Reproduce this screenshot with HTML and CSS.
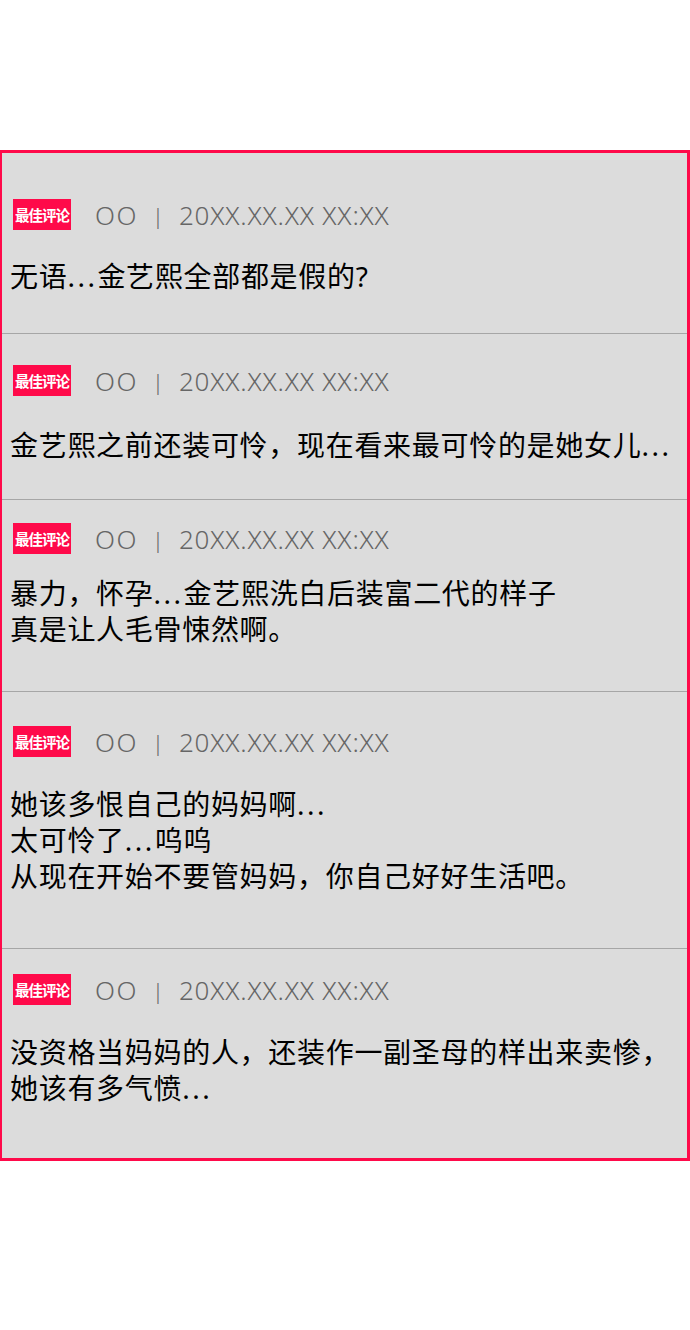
FILE: index.html
```html
<!DOCTYPE html>
<html lang="zh-CN">
<head>
<meta charset="utf-8">
<link rel="stylesheet" href="styles.css">
</head>
<body>
<div class="page">
  <div class="board">
    <div class="comment c1">
      <div class="meta"><span class="badge">最佳评论</span><span class="user">OO</span><span class="sep">|</span><span class="time">20XX.XX.XX XX:XX</span></div>
      <div class="text">无语<span class="dots">...</span>金艺熙全部都是假的?</div>
    </div>
    <div class="comment c2">
      <div class="meta"><span class="badge">最佳评论</span><span class="user">OO</span><span class="sep">|</span><span class="time">20XX.XX.XX XX:XX</span></div>
      <div class="text">金艺熙之前还装可怜，现在看来最可怜的是她女儿<span class="dots">...</span></div>
    </div>
    <div class="comment c3">
      <div class="meta"><span class="badge">最佳评论</span><span class="user">OO</span><span class="sep">|</span><span class="time">20XX.XX.XX XX:XX</span></div>
      <div class="text">暴力，怀孕<span class="dots">...</span>金艺熙洗白后装富二代的样子<br>真是让人毛骨悚然啊。</div>
    </div>
    <div class="comment c4">
      <div class="meta"><span class="badge">最佳评论</span><span class="user">OO</span><span class="sep">|</span><span class="time">20XX.XX.XX XX:XX</span></div>
      <div class="text">她该多恨自己的妈妈啊<span class="dots">...</span><br>太可怜了<span class="dots">...</span>呜呜<br>从现在开始不要管妈妈，你自己好好生活吧。</div>
    </div>
    <div class="comment c5">
      <div class="meta"><span class="badge">最佳评论</span><span class="user">OO</span><span class="sep">|</span><span class="time">20XX.XX.XX XX:XX</span></div>
      <div class="text">没资格当妈妈的人，还装作一副圣母的样出来卖惨，<br>她该有多气愤<span class="dots">...</span></div>
    </div>
  </div>
</div>
</body>
</html>
```

FILE: styles.css
```css
html, body {
  margin: 0;
  padding: 0;
  background: #ffffff;
}
.page {
  width: 690px;
  height: 1330px;
  padding-top: 150px;
  box-sizing: border-box;
  font-family: "Noto Sans CJK SC", "Noto Sans", sans-serif;
}
.board {
  background: #dcdcdc;
  border: 2px solid #ff0a4a;
  border-top-width: 3px;
  border-bottom-width: 3px;
  border-right-width: 3px;
}
.comment {
  border-bottom: 1px solid #a6a6a6;
  padding-left: 8px;
  padding-right: 4px;
}
.comment:last-child {
  border-bottom: none;
}
.meta {
  display: flex;
  align-items: center;
  height: 31px;
  color: #666666;
  font-family: "Noto Sans", "Noto Sans CJK SC", sans-serif;
  font-weight: 300;
}
.badge {
  width: 58px;
  height: 31px;
  margin-left: 3px;
  background: #ff0a4a;
  color: #ffffff;
  font-family: "Noto Sans CJK SC", sans-serif;
  font-size: 14.5px;
  font-weight: 700;
  display: flex;
  align-items: center;
  justify-content: center;
  letter-spacing: -1px;
  margin-right: 24px;
}
.user {
  font-size: 26px;
  letter-spacing: 1.5px;
}
.sep {
  font-size: 22px;
  color: #6a6a6a;
  margin: 0 15px 0 14px;
}
.time {
  font-size: 26px;
  letter-spacing: 0.8px;
}
.text {
  font-family: "Noto Sans", "Noto Sans CJK SC", sans-serif;
  font-size: 28px;
  line-height: 36px;
  color: #000000;
  letter-spacing: 0.7px;
}
.dots {
  letter-spacing: 2.5px;
}
.c1 { padding-top: 46px; padding-bottom: 39px; }
.c1 .text { margin-top: 28px; }
.c2 { padding-top: 31px; padding-bottom: 36px; }
.c2 .text { margin-top: 31px; }
.c3 { padding-top: 23px; padding-bottom: 44px; }
.c3 .text { margin-top: 21px; }
.c4 { padding-top: 34px; padding-bottom: 54px; }
.c4 .text { margin-top: 29px; }
.c5 { padding-top: 25px; padding-bottom: 52px; }
.c5 .text { margin-top: 29px; }
```
